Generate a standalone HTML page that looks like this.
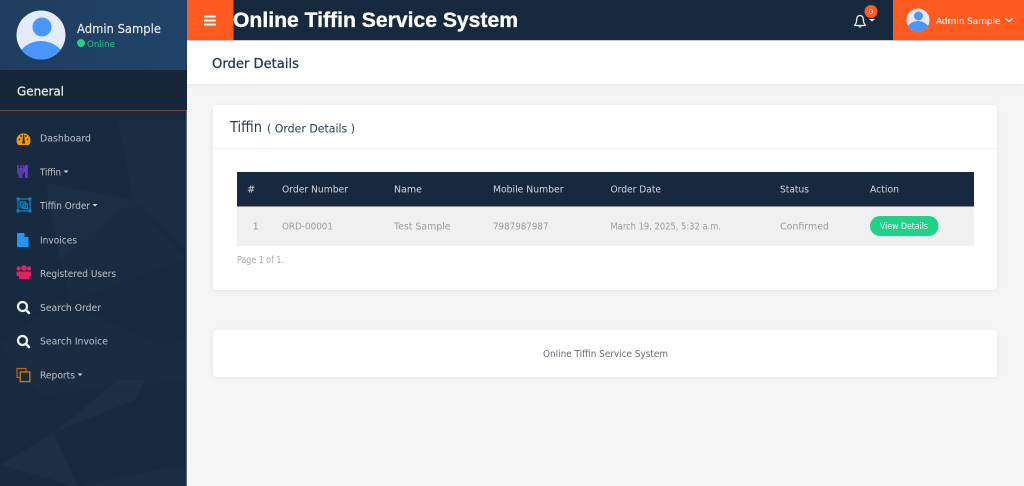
<!DOCTYPE html>
<html lang="en">
<head>
<meta charset="utf-8">
<title>Online Tiffin Service System</title>
<style>
html,body{margin:0;padding:0;width:1024px;height:486px;overflow:hidden;background:#f5f5f5}
svg{display:block;position:absolute;left:0;top:0}
text{font-family:"DejaVu Sans","Liberation Sans",sans-serif}
</style>
</head>
<body>
<svg xmlns="http://www.w3.org/2000/svg" width="1024" height="486" viewBox="0 0 1024 486">
<defs>
<linearGradient id="pf" x1="0" y1="0" x2="1" y2="0"><stop offset="0" stop-color="#1f3d5f"/><stop offset="1" stop-color="#214268"/></linearGradient>
<filter id="sh" x="-5%" y="-20%" width="110%" height="140%"><feDropShadow dx="0" dy="1" stdDeviation="3" flood-color="#000" flood-opacity=".06"/></filter>
<clipPath id="a1"><circle cx="41" cy="35" r="24.500"/></clipPath>
<clipPath id="a2"><circle cx="918" cy="20" r="11.500"/></clipPath>
</defs>

<!-- sidebar -->
<rect x="0" y="0" width="187" height="486" fill="#172a40"/>
<g fill="#fff">
<polygon points="45,183 133,200 60,260" opacity=".018"/>
<polygon points="133,200 187,250 187,120 118,120" opacity=".016"/>
<polygon points="60,260 133,200 187,260 70,300" opacity=".01"/>
<polygon points="0,465 53,433 78,486 75,486" opacity=".025"/>
<polygon points="53,433 118,380 145,380 135,400" opacity=".025"/>
<polygon points="80,486 170,467 187,467 187,486" opacity=".016"/>
<polygon points="0,345 60,300 160,345 187,340 187,380 40,395" opacity=".01"/>
</g>
<rect x="186" y="0" width="1" height="486" fill="#5c6a7a"/>
<rect x="0" y="0" width="187" height="70" fill="url(#pf)"/>
<rect x="0" y="70" width="187" height="40" fill="#16273c"/>
<rect x="0" y="110" width="187" height="1" fill="#7a3f2f"/>

<!-- profile -->
<circle cx="41" cy="35" r="24.500" fill="#e4ebff"/>
<g clip-path="url(#a1)" fill="#4a96ff"><circle cx="42" cy="27" r="9.500"/><ellipse cx="41" cy="62" rx="24" ry="21"/></g>
<text x="77" y="33" font-size="12.500" fill="#e9edf2" stroke="#e9edf2" stroke-width=".15" textLength="84" lengthAdjust="spacingAndGlyphs">Admin Sample</text>
<circle cx="81" cy="43" r="4" fill="#1fd286"/>
<text x="87" y="47" font-size="9" fill="#1fc682" textLength="28" lengthAdjust="spacingAndGlyphs">Online</text>
<text x="17" y="95.500" font-size="12.500" fill="#e6e9ed" stroke="#e6e9ed" stroke-width=".25" textLength="47" lengthAdjust="spacingAndGlyphs">General</text>

<!-- menu icons -->
<path d="M18.300 145A7 7 0 1 1 28.700 145z" transform="translate(0 0)" fill="#f59a0c"/>
<g fill="#17293f"><circle cx="19.500" cy="139.500" r=".9"/><circle cx="21" cy="136" r=".9"/><circle cx="26" cy="136" r=".9"/><circle cx="27.500" cy="139.500" r=".9"/><path d="M23 134.500h1.200l.3 6 .6 3h-3l.6-3z"/></g>
<path d="M17 165h1.800v3h1.200v-3h1.600v3h1.200v-3h1.200v8l-1.500 1.500v3.500h-4v-3.500l-1.500-1.500z" fill="#5d39b0"/>
<path d="M25 165h2.800v13h-2.800v-6h-1.500v-3z" fill="#6a40c0"/>
<g fill="none" stroke="#127fc0" stroke-width="1.300"><rect x="18" y="199" width="12" height="12"/><rect x="20.500" y="202" width="5" height="5"/><rect x="23" y="204" width="4.500" height="4.500"/></g>
<g fill="#127fc0"><rect x="16.500" y="197.500" width="3" height="3"/><rect x="28.500" y="197.500" width="3" height="3"/><rect x="16.500" y="209.500" width="3" height="3"/><rect x="28.500" y="209.500" width="3" height="3"/></g>
<path d="M17 233h7l4.500 4.500v9.500h-11.500z" fill="#2196f3"/><path d="M24.500 233.500l3.500 3.500h-3.500z" fill="#17293f"/>
<g fill="#e91e63"><circle cx="24" cy="268" r="2.800"/><circle cx="18.700" cy="268.500" r="2.200"/><circle cx="29" cy="268.500" r="2.200"/><path d="M19 279v-5.500q0-2 2-2h6q2 0 2 2v5.500z"/><path d="M16.500 276v-3q0-1.500 1.500-1.500h2v4.500zM31.200 276v-3q0-1.500-1.500-1.500h-2v4.500z"/></g>
<g fill="none" stroke="#eef1f4" stroke-linecap="round"><circle cx="22.500" cy="306.500" r="4.500" stroke-width="2.200"/><path d="M26 310l3 3" stroke-width="2.600"/><circle cx="22.500" cy="340.500" r="4.500" stroke-width="2.200"/><path d="M26 344l3 3" stroke-width="2.600"/></g>
<g fill="none" stroke-width="1.200"><rect x="17" y="368.500" width="9" height="9" stroke="#b06d14"/><rect x="20.200" y="372" width="9.600" height="9.600" stroke="#c4780f" stroke-width="1.400" fill="#17293f"/></g>

<!-- menu text -->
<g font-size="9.500" fill="#bcc2ca">
<text x="40" y="141.500" textLength="51" lengthAdjust="spacingAndGlyphs">Dashboard</text>
<text x="40" y="175.500" textLength="21" lengthAdjust="spacingAndGlyphs">Tiffin</text>
<text x="40" y="209" textLength="50" lengthAdjust="spacingAndGlyphs">Tiffin Order</text>
<text x="40" y="243.500" textLength="37" lengthAdjust="spacingAndGlyphs">Invoices</text>
<text x="40" y="277" textLength="76" lengthAdjust="spacingAndGlyphs">Registered Users</text>
<text x="40" y="311" textLength="61" lengthAdjust="spacingAndGlyphs">Search Order</text>
<text x="40" y="344.500" textLength="68" lengthAdjust="spacingAndGlyphs">Search Invoice</text>
<text x="40" y="378.500" textLength="35" lengthAdjust="spacingAndGlyphs">Reports</text>
</g>
<g fill="#d5d9de"><path d="M63.500 170.500h5l-2.500 2.500z"/><path d="M92.500 204h5l-2.500 2.500z"/><path d="M77.500 373.500h5l-2.500 2.500z"/></g>

<!-- top bar -->
<rect x="187" y="0" width="837" height="40" fill="#17293f"/>
<rect x="187" y="0" width="46.500" height="40" fill="#ff5a1f"/>
<rect x="893" y="0" width="131" height="40" fill="#ff5a1f"/>
<rect x="187" y="40" width="837" height="1" fill="#c9ccd0"/>
<g fill="#fff"><rect x="204" y="15.500" width="12" height="2" rx=".8"/><rect x="204" y="19.500" width="12" height="2" rx=".8"/><rect x="204" y="23.500" width="12" height="2" rx=".8"/></g>
<text x="233" y="27" font-size="21" font-weight="bold" fill="#fff" stroke="#fff" stroke-width=".35" textLength="285" lengthAdjust="spacingAndGlyphs" style="font-family:'Liberation Sans',sans-serif">Online Tiffin Service System</text>
<path d="M854.500 25.500c1.800-1.500 2-3.500 2.200-6 .2-2.500 1.500-4 3.300-4s3.100 1.500 3.300 4c.2 2.500.4 4.500 2.200 6z" fill="none" stroke="#f2f3f5" stroke-width="1.300" stroke-linejoin="round"/>
<path d="M858.300 26.500a1.800 1.800 0 0 0 3.400 0z" fill="#f2f3f5"/>
<path d="M869 19h6l-3 2.500z" fill="#f2f3f5"/>
<circle cx="871" cy="11.500" r="6.500" fill="#ff5a1f"/>
<text x="871" y="14" font-size="7" fill="#fff" text-anchor="middle">0</text>
<circle cx="918" cy="20" r="11.500" fill="#e4ebff"/>
<g clip-path="url(#a2)" fill="#4a96ff"><circle cx="918.500" cy="16" r="4.500"/><ellipse cx="918" cy="31" rx="11.500" ry="10"/></g>
<text x="936" y="24" font-size="9" fill="#fff" stroke="#fff" stroke-width=".1" textLength="64.500" lengthAdjust="spacingAndGlyphs">Admin Sample</text>
<path d="M1005.500 18.500l3.500 3 3.500-3" fill="none" stroke="#fff" stroke-width="1.200" stroke-linecap="round" stroke-linejoin="round"/>

<!-- page header -->
<rect x="187" y="41" width="837" height="43" fill="#fff" filter="url(#sh)"/>
<text x="212" y="68" font-size="13.500" fill="#22344c" stroke="#22344c" stroke-width=".25" textLength="87" lengthAdjust="spacingAndGlyphs">Order Details</text>

<!-- main card -->
<rect x="213" y="105" width="784" height="185" rx="4" fill="#fff" filter="url(#sh)"/>
<rect x="213" y="148" width="784" height="1" fill="#f1f1f1"/>
<text x="230" y="132" font-size="15" fill="#2a3a4e" textLength="32" lengthAdjust="spacingAndGlyphs">Tiffin</text>
<text x="267" y="132.500" font-size="11.500" fill="#2a3a4e" textLength="88" lengthAdjust="spacingAndGlyphs">( Order Details )</text>

<!-- table -->
<rect x="237" y="172" width="737" height="34.500" fill="#17293f"/>
<rect x="237" y="206.500" width="737" height="39.500" fill="#f0f0f0"/>
<g font-size="10" fill="#d4d8dd">
<text x="247" y="192.500">#</text>
<text x="282" y="192.500" textLength="66" lengthAdjust="spacingAndGlyphs">Order Number</text>
<text x="394" y="192.500" textLength="28" lengthAdjust="spacingAndGlyphs">Name</text>
<text x="493" y="192.500" textLength="70.500" lengthAdjust="spacingAndGlyphs">Mobile Number</text>
<text x="610.500" y="192.500" textLength="50.500" lengthAdjust="spacingAndGlyphs">Order Date</text>
<text x="780" y="192.500" textLength="29" lengthAdjust="spacingAndGlyphs">Status</text>
<text x="870" y="192.500" textLength="29" lengthAdjust="spacingAndGlyphs">Action</text>
</g>
<g font-size="10" fill="#9a9a9a">
<text x="252.500" y="229.500">1</text>
<text x="282" y="229.500" textLength="51" lengthAdjust="spacingAndGlyphs">ORD-00001</text>
<text x="394" y="229.500" textLength="56.500" lengthAdjust="spacingAndGlyphs">Test Sample</text>
<text x="493" y="229.500" textLength="55.500" lengthAdjust="spacingAndGlyphs">7987987987</text>
<text x="610.500" y="229.500" textLength="110.500" lengthAdjust="spacingAndGlyphs">March 19, 2025, 5:32 a.m.</text>
<text x="780" y="229.500" textLength="49" lengthAdjust="spacingAndGlyphs">Confirmed</text>
</g>
<rect x="870" y="216" width="68.500" height="20" rx="10" fill="#1fd286"/>
<text x="880" y="229" font-size="8.500" fill="#fff" textLength="48" lengthAdjust="spacingAndGlyphs">View Details</text>
<text x="237" y="263" font-size="9.500" fill="#a8a8a8" textLength="47" lengthAdjust="spacingAndGlyphs">Page 1 of 1.</text>

<!-- footer -->
<rect x="213" y="330" width="784" height="47" rx="4" fill="#fff" filter="url(#sh)"/>
<text x="543" y="357" font-size="9.500" fill="#666b72" textLength="125" lengthAdjust="spacingAndGlyphs">Online Tiffin Service System</text>
</svg>
</body>
</html>
